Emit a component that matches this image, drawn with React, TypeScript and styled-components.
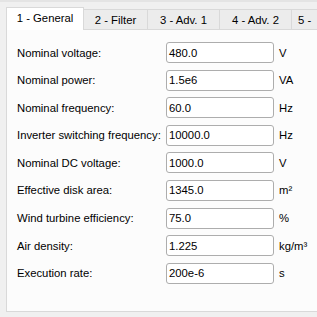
import React from "react";
import styled, { createGlobalStyle } from "styled-components";

const GlobalStyle = createGlobalStyle`
  html, body {
    margin: 0;
    padding: 0;
    background: #f0f0f0;
    overflow: hidden;
  }
  body {
    font-family: "Liberation Sans", Arial, sans-serif;
    font-size: 11.3px;
    color: #000;
  }
`;

const Window = styled.div`
  width: 317px;
  height: 317px;
  border-top: 2px solid #e4e4e4;
  box-sizing: border-box;
  padding: 5px 0 0 6px;
  overflow: hidden;
`;

const TabBar = styled.div`
  display: flex;
  align-items: flex-end;
  height: 22px;
  position: relative;
  z-index: 1;
`;

const Tab = styled.div<{ $w: number; $active?: boolean }>`
  flex: none;
  width: ${(p) => p.$w}px;
  box-sizing: border-box;
  height: ${(p) => (p.$active ? 23 : 20)}px;
  margin-bottom: ${(p) => (p.$active ? -1 : 0)}px;
  margin-right: -1px;
  border: 1px solid #d9d9d9;
  border-bottom: none;
  background: ${(p) => (p.$active ? "#ffffff" : "#ececec")};
  display: flex;
  align-items: center;
  justify-content: ${(p) => (p.$w > 40 ? "center" : "flex-start")};
  padding: ${(p) => (p.$active ? "0 0 2px" : p.$w > 40 ? "0" : "0 0 0 6px")};
  white-space: nowrap;
  overflow: hidden;
  position: relative;
  z-index: ${(p) => (p.$active ? 2 : 1)};
`;

const Pane = styled.div`
  width: 330px;
  height: 283px;
  box-sizing: border-box;
  border: 1px solid #d9d9d9;
  background: #fcfcfc;
  padding: 12px 0 0 10px;
`;

const Form = styled.div`
  display: grid;
  grid-template-columns: 149px 108px auto;
  grid-auto-rows: 21px;
  row-gap: 6.6px;
  align-items: center;
`;

const Label = styled.div`
  white-space: nowrap;
`;

const Field = styled.div`
  height: 21px;
  box-sizing: border-box;
  border: 1px solid #adadad;
  border-radius: 3px;
  background: #fff;
  display: flex;
  align-items: center;
  padding-left: 2px;
`;

const Unit = styled.div`
  padding-left: 5px;
`;

const tabs = [
  { label: "1 - General", w: 78 },
  { label: "2 - Filter", w: 65 },
  { label: "3 - Adv. 1", w: 73 },
  { label: "4 - Adv. 2", w: 73 },
  { label: "5 -", w: 30 },
];

const rows = [
  ["Nominal voltage:", "480.0", "V"],
  ["Nominal power:", "1.5e6", "VA"],
  ["Nominal frequency:", "60.0", "Hz"],
  ["Inverter switching frequency:", "10000.0", "Hz"],
  ["Nominal DC voltage:", "1000.0", "V"],
  ["Effective disk area:", "1345.0", "m²"],
  ["Wind turbine efficiency:", "75.0", "%"],
  ["Air density:", "1.225", "kg/m³"],
  ["Execution rate:", "200e-6", "s"],
];

export default function App() {
  return (
    <>
      <GlobalStyle />
      <Window>
        <TabBar>
          {tabs.map((t, i) => (
            <Tab key={t.label} $w={t.w} $active={i === 0}>
              {t.label}
            </Tab>
          ))}
        </TabBar>
        <Pane>
          <Form>
            {rows.map(([label, value, unit]) => (
              <React.Fragment key={label}>
                <Label>{label}</Label>
                <Field>{value}</Field>
                <Unit>{unit}</Unit>
              </React.Fragment>
            ))}
          </Form>
        </Pane>
      </Window>
    </>
  );
}
